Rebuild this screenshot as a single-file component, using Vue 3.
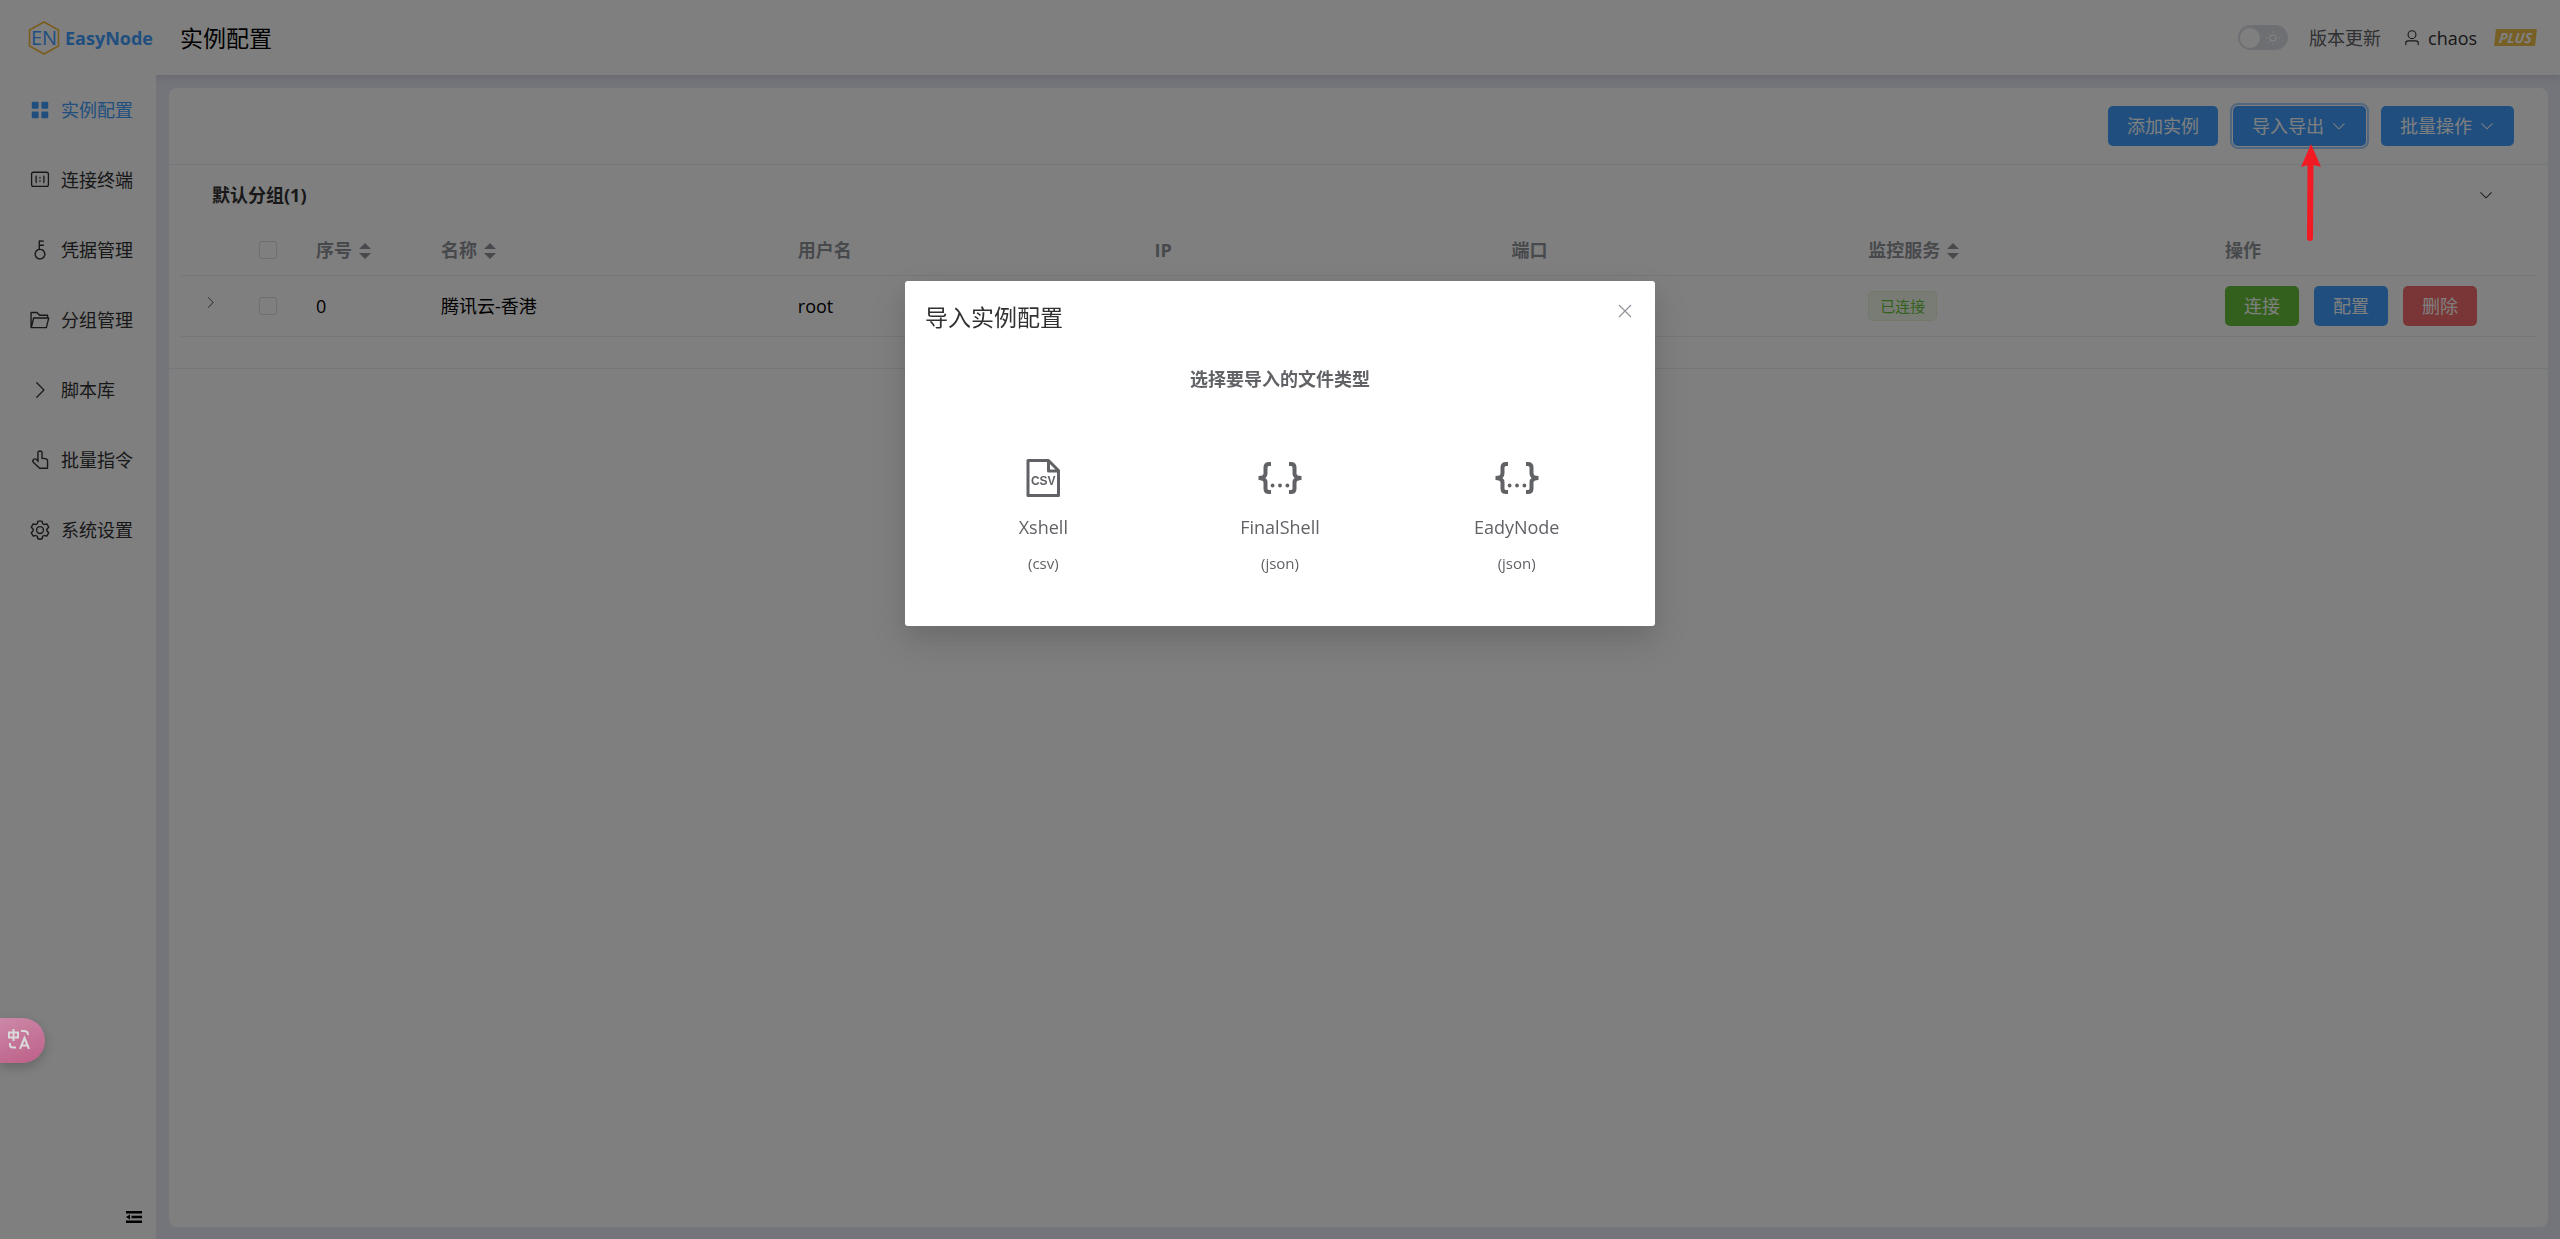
<template>
    <div class="page">
        <aside class="sidebar">
            <div class="logo">
                <svg class="logo-mark" viewBox="0 0 32 34">
                    <path d="M16 1 L30.500 9 V25 L16 33 L1.500 25 V9 Z" fill="none" stroke="#f5b83d" stroke-width="1.600" />
                    <text x="16" y="23.500" text-anchor="middle" class="logo-letters">EN</text>
                </svg>
                <span class="logo-name">EasyNode</span>
            </div>
            <nav class="menu">
                <a v-for="item in menu" :key="item.label" href="#" class="menu-item" :class="{ active: item.active }">
                    <svg class="menu-icon" viewBox="0 0 1024 1024" fill="currentColor">
                        <path :d="item.icon" />
                    </svg>
                    <span>{{ item.label }}</span>
                </a>
            </nav>
            <button class="collapse-btn" aria-label="收起菜单">
                <svg viewBox="0 0 16 14" fill="currentColor">
                    <path d="M0 1h16v2.500H0zM5.500 5.800H16v2.400H5.500zM0 10.500h16V13H0zM0 7l4-2.500v5z" />
                </svg>
            </button>
        </aside>

        <div class="main">
            <header class="topbar">
                <h1>实例配置</h1>
                <div class="topbar-right">
                    <button class="switch" role="switch" :aria-checked="dark" aria-label="深色模式" @click="dark = !dark">
                        <span class="knob"></span>
                        <svg viewBox="0 0 16 16" class="sun">
                            <circle cx="8" cy="8" r="3" fill="none" stroke="#fff" stroke-width="1.400" />
                            <path d="M8 1v2M8 13v2M1 8h2M13 8h2M3 3l1.300 1.300M11.700 11.700L13 13M3 13l1.300-1.300M11.700 4.300L13 3" stroke="#fff" />
                        </svg>
                    </button>
                    <a href="#" class="version">版本更新</a>
                    <a href="#" class="user">
                        <svg viewBox="0 0 1024 1024" fill="currentColor">
                            <path d="M512 512a192 192 0 1 0 0-384 192 192 0 0 0 0 384m0 64a256 256 0 1 1 0-512 256 256 0 0 1 0 512m320 320v-96a96 96 0 0 0-96-96H288a96 96 0 0 0-96 96v96a32 32 0 1 1-64 0v-96a160 160 0 0 1 160-160h448a160 160 0 0 1 160 160v96a32 32 0 1 1-64 0" />
                        </svg>
                        <span>chaos</span>
                    </a>
                    <span class="plus"><b>PLUS</b></span>
                </div>
            </header>

            <main class="content">
                <section class="card">
                    <div class="toolbar">
                        <button class="btn primary">添加实例</button>
                        <button class="btn primary focused">
                            导入导出
                            <svg class="arrow-down" viewBox="0 0 1024 1024" fill="currentColor"><path :d="chevronDown" /></svg>
                        </button>
                        <button class="btn primary">
                            批量操作
                            <svg class="arrow-down" viewBox="0 0 1024 1024" fill="currentColor"><path :d="chevronDown" /></svg>
                        </button>
                    </div>
                    <div class="group">
                        <button class="group-title">
                            <span>默认分组({{ hosts.length }})</span>
                            <svg class="arrow-down" viewBox="0 0 1024 1024" fill="currentColor"><path :d="chevronDown" /></svg>
                        </button>
                        <table class="hosts">
                            <colgroup>
                                <col class="col-tick">
                                <col class="col-tick">
                                <col class="col-index">
                                <col span="5">
                                <col class="col-action">
                            </colgroup>
                            <thead>
                                <tr>
                                    <th></th>
                                    <th class="tick"><input type="checkbox" aria-label="全选"></th>
                                    <th v-for="col in columns" :key="col.label">
                                        {{ col.label }}
                                        <svg v-if="col.sortable" class="sort" viewBox="0 0 12 16" fill="currentColor">
                                            <path d="M6 0l6 6H0zM6 16l6-6H0z" />
                                        </svg>
                                    </th>
                                </tr>
                            </thead>
                            <tbody>
                                <tr v-for="host in hosts" :key="host.index">
                                    <td class="tick">
                                        <button class="expand" aria-label="展开">
                                            <svg viewBox="0 0 1024 1024" fill="currentColor"><path :d="chevronRight" /></svg>
                                        </button>
                                    </td>
                                    <td class="tick"><input type="checkbox" :aria-label="host.name"></td>
                                    <td>{{ host.index }}</td>
                                    <td>{{ host.name }}</td>
                                    <td>{{ host.username }}</td>
                                    <td></td>
                                    <td></td>
                                    <td><span class="tag">已连接</span></td>
                                    <td>
                                        <div class="actions">
                                            <button class="btn success">连接</button>
                                            <button class="btn primary">配置</button>
                                            <button class="btn danger">删除</button>
                                        </div>
                                    </td>
                                </tr>
                            </tbody>
                        </table>
                    </div>
                </section>
            </main>
        </div>

        <div v-if="dialogVisible" class="overlay">
            <div class="dialog" role="dialog" aria-labelledby="dialog-title">
                <header class="dialog-header">
                    <h2 id="dialog-title">导入实例配置</h2>
                    <button class="close" aria-label="关闭" @click="dialogVisible = false">
                        <svg viewBox="0 0 14 14"><path d="M1 1l12 12M13 1L1 13" stroke="currentColor" stroke-width="1.200" /></svg>
                    </button>
                </header>
                <h3>选择要导入的文件类型</h3>
                <div class="types">
                    <button v-for="type in types" :key="type.name" class="type">
                        <svg v-if="type.ext === 'csv'" viewBox="0 0 48 48">
                            <path d="M9 6.500h20.500l10 10V41.500H9zM29.500 6.500V17H39.500" fill="none" stroke="currentColor" stroke-width="3" stroke-linejoin="round" />
                            <text x="24.300" y="31" text-anchor="middle" class="csv-letters">CSV</text>
                        </svg>
                        <svg v-else viewBox="0 0 48 48">
                            <g fill="none" stroke="currentColor" stroke-width="4">
                                <path d="M15 10H13q-3.500 0-3.500 3.500v6q0 4.500-7 4.500q7 0 7 4.500v6q0 3.500 3.500 3.500h2" />
                                <path d="M33 10H35q3.500 0 3.500 3.500v6q0 4.500 7 4.500q-7 0-7 4.500v6q0 3.500-3.500 3.500h-2" />
                            </g>
                            <g fill="currentColor">
                                <circle cx="16.600" cy="31.500" r="1.900" />
                                <circle cx="24" cy="31.500" r="1.900" />
                                <circle cx="31.400" cy="31.500" r="1.900" />
                            </g>
                        </svg>
                        <span class="type-name">{{ type.name }}</span>
                        <span class="type-ext">({{ type.ext }})</span>
                    </button>
                </div>
            </div>
        </div>

        <svg class="pointer" viewBox="0 0 22 98">
            <path d="M10.500 20L10 94" stroke="#f21b24" stroke-width="6" stroke-linecap="round" />
            <path d="M11 0L21 23Q11 19 1 23z" fill="#f21b24" />
        </svg>

        <button class="translate" aria-label="翻译">
            <svg viewBox="0 0 22 20" fill="none" stroke="#fff" stroke-width="2">
                <path d="M1 3.500h9v5H1zM5.500 0v12M13 2h3q4 0 4 4M2 14v2q0 2.500 3 2.500h3M12 20l4.500-11L21 20M13.500 16.500h6" />
            </svg>
        </button>
    </div>
</template>

<script setup>
import { ref } from 'vue';

const dark = ref(false);
const dialogVisible = ref(true);

const chevronDown = 'M831.872 340.864 512 652.672 192.128 340.864a30.592 30.592 0 0 0-42.752 0 29.120 29.120 0 0 0 0 41.600L489.664 714.240a32 32 0 0 0 44.672 0l340.288-331.712a29.120 29.120 0 0 0 0-41.728 30.592 30.592 0 0 0-42.752 0z';
const chevronRight = 'M340.864 149.312a30.592 30.592 0 0 0 0 42.752L652.736 512 340.864 831.872a30.592 30.592 0 0 0 0 42.752 29.120 29.120 0 0 0 41.728 0L714.240 534.336a32 32 0 0 0 0-44.672L382.592 149.376a29.120 29.120 0 0 0-41.728 0z';

const menu = [
    { label: '实例配置', active: true, icon: 'M160 448a32 32 0 0 1-32-32V160a32 32 0 0 1 32-32h256a32 32 0 0 1 32 32v256a32 32 0 0 1-32 32zm448 0a32 32 0 0 1-32-32V160a32 32 0 0 1 32-32h256a32 32 0 0 1 32 32v256a32 32 0 0 1-32 32zM160 896a32 32 0 0 1-32-32V608a32 32 0 0 1 32-32h256a32 32 0 0 1 32 32v256a32 32 0 0 1-32 32zm448 0a32 32 0 0 1-32-32V608a32 32 0 0 1 32-32h256a32 32 0 0 1 32 32v256a32 32 0 0 1-32 32z' },
    { label: '连接终端', icon: 'M813.176 180.706a60.235 60.235 0 0 1 60.236 60.235v481.883a60.235 60.235 0 0 1-60.236 60.235H210.824a60.235 60.235 0 0 1-60.236-60.235V240.940a60.235 60.235 0 0 1 60.236-60.235h602.352zm0-60.235H210.824A120.470 120.470 0 0 0 90.353 240.940v481.883a120.470 120.470 0 0 0 120.470 120.470h602.353a120.470 120.470 0 0 0 120.471-120.470V240.940a120.470 120.470 0 0 0-120.470-120.470zm-120.470 180.705a30.118 30.118 0 0 0-30.118 30.118v301.177a30.118 30.118 0 0 0 60.236 0V331.294a30.118 30.118 0 0 0-30.118-30.118zm-361.412 0a30.118 30.118 0 0 0-30.118 30.118v301.177a30.118 30.118 0 1 0 60.236 0V331.294a30.118 30.118 0 0 0-30.118-30.118zM512 361.412a30.118 30.118 0 0 0-30.118 30.117v30.118a30.118 30.118 0 0 0 60.236 0V391.530A30.118 30.118 0 0 0 512 361.412zM512 512a30.118 30.118 0 0 0-30.118 30.118v30.117a30.118 30.118 0 0 0 60.236 0v-30.117A30.118 30.118 0 0 0 512 512z' },
    { label: '凭据管理', icon: 'M448 456.064V96a32 32 0 0 1 32-32.064L672 64a32 32 0 0 1 0 64H512v128h160a32 32 0 0 1 0 64H512v128a256 256 0 1 1-64 8.064M512 896a192 192 0 1 0 0-384 192 192 0 0 0 0 384' },
    { label: '分组管理', icon: 'M878.080 448H241.920l-96 384h636.160l96-384zM832 384v-64H485.760L357.504 192H128v448l57.920-231.744A32 32 0 0 1 216.960 384zm-24.960 512H96a32 32 0 0 1-32-32V160a32 32 0 0 1 32-32h287.872l128.384 128H864a32 32 0 0 1 32 32v96h23.040a32 32 0 0 1 31.040 39.744l-112 448A32 32 0 0 1 807.040 896' },
    { label: '脚本库', icon: chevronRight },
    { label: '批量指令', icon: 'M511.552 128c-35.584 0-64.384 28.800-64.384 64.448v444.544L324.160 513.280c-25.152-25.280-65.792-25.280-90.944 0-25.152 25.344-25.152 66.368 0 91.712L507.520 864H832V569.600c0-45.312-34.560-83.200-79.680-87.552L576 464V192.448C576 156.800 547.136 128 511.552 128M359.040 441.216l24.128 24.320V192.448a128.448 128.448 0 1 1 256.832 0v213.632l118.592 11.840A151.936 151.936 0 0 1 896 569.600V896a32 32 0 0 1-32 32H494.784a32 32 0 0 1-21.952-8.768l-284.800-269.120a128.640 128.640 0 0 1 0-182.080 127.552 127.552 0 0 1 171.008-6.784z' },
    { label: '系统设置', icon: 'M600.704 64a32 32 0 0 1 30.464 22.208l35.200 109.376c14.784 7.232 28.928 15.360 42.432 24.512l112.384-24.192a32 32 0 0 1 34.432 15.360L944.320 364.800a32 32 0 0 1-4.032 37.504l-77.120 85.120a357.120 357.120 0 0 1 0 49.024l77.120 85.248a32 32 0 0 1 4.032 37.504l-88.704 153.600a32 32 0 0 1-34.432 15.296L708.800 803.904c-13.440 9.088-27.648 17.280-42.368 24.512l-35.264 109.376A32 32 0 0 1 600.704 960H423.296a32 32 0 0 1-30.464-22.208L357.696 828.480a351.616 351.616 0 0 1-42.560-24.640l-112.320 24.256a32 32 0 0 1-34.432-15.360L79.680 659.200a32 32 0 0 1 4.032-37.504l77.120-85.248a357.120 357.120 0 0 1 0-48.896l-77.120-85.248A32 32 0 0 1 79.680 364.800l88.704-153.600a32 32 0 0 1 34.432-15.296l112.320 24.256c13.568-9.152 27.776-17.408 42.560-24.640l35.200-109.312A32 32 0 0 1 423.232 64H600.640zm-23.424 64H446.720l-36.352 113.088-24.512 11.968a294.113 294.113 0 0 0-34.816 20.096l-22.656 15.360-116.224-25.088-65.280 113.152 79.680 88.192-1.920 27.136a293.120 293.120 0 0 0 0 40.192l1.920 27.136-79.808 88.192 65.344 113.152 116.224-25.024 22.656 15.296a294.113 294.113 0 0 0 34.816 20.096l24.512 11.968L446.720 896h130.688l36.480-113.152 24.448-11.904a288.282 288.282 0 0 0 34.752-20.096l22.592-15.296 116.288 25.024 65.280-113.152-79.744-88.192 1.920-27.136a293.120 293.120 0 0 0 0-40.256l-1.920-27.136 79.808-88.128-65.344-113.152-116.288 24.960-22.592-15.232a287.616 287.616 0 0 0-34.752-20.096l-24.448-11.904L577.344 128zM512 320a192 192 0 1 1 0 384 192 192 0 0 1 0-384m0 64a128 128 0 1 0 0 256 128 128 0 0 0 0-256' },
];

const columns = [
    { label: '序号', sortable: true },
    { label: '名称', sortable: true },
    { label: '用户名' },
    { label: 'IP' },
    { label: '端口' },
    { label: '监控服务', sortable: true },
    { label: '操作' },
];

const hosts = [{ index: 0, name: '腾讯云-香港', username: 'root' }];

const types = [
    { name: 'Xshell', ext: 'csv' },
    { name: 'FinalShell', ext: 'json' },
    { name: 'EadyNode', ext: 'json' },
];
</script>

<style>
body {
    margin: 0;
    background: #fff;
}
</style>

<style scoped>
* {
    box-sizing: border-box;
}

.page {
    display: flex;
    min-height: 100vh;
    font-family: "Open Sans", "Noto Sans CJK SC", sans-serif;
    font-size: 18px;
    line-height: 28px;
    color: #303133;
}

button {
    padding: 0;
    border: 0;
    background: none;
    font: inherit;
    color: inherit;
    cursor: pointer;
}

a {
    color: inherit;
    text-decoration: none;
}

h1,
h2,
h3 {
    margin: 0;
}

svg {
    display: block;
    flex: none;
}

.sidebar {
    display: flex;
    flex-direction: column;
    width: 156px;
    flex: none;
    background: #fff;
}

.logo {
    display: flex;
    align-items: center;
    gap: 5px;
    height: 75px;
    padding-left: 28px;
}

.logo-mark {
    width: 32px;
    height: 34px;
}

.logo-letters {
    font-family: "Open Sans", sans-serif;
    font-size: 20px;
    fill: #409eff;
}

.logo-name {
    font-weight: 700;
    color: #409eff;
}

.menu-item {
    display: flex;
    align-items: center;
    gap: 10px;
    height: 70px;
    padding-left: 29px;
}

.menu-item.active {
    color: #409eff;
}

.menu-icon {
    width: 22px;
    height: 22px;
}

.collapse-btn {
    align-self: flex-end;
    margin: auto 14px 15px 0;
    color: #000;
}

.collapse-btn svg {
    width: 16px;
    height: 14px;
}

.main {
    display: flex;
    flex-direction: column;
    flex: 1;
    min-width: 0;
}

.topbar {
    position: relative;
    display: flex;
    align-items: center;
    justify-content: space-between;
    height: 75px;
    padding: 0 24px;
    background: #fff;
    box-shadow: 0 2px 8px rgba(0, 0, 0, 0.12);
    clip-path: inset(0 0 -12px 0);
}

.topbar h1 {
    font-size: 23px;
    font-weight: 400;
    color: #000;
}

.topbar-right {
    display: flex;
    align-items: center;
}

.switch {
    display: flex;
    align-items: center;
    justify-content: space-between;
    width: 50px;
    height: 25px;
    padding: 0 7px 0 2px;
    border-radius: 13px;
    background: #dcdfe6;
}

.knob {
    width: 20px;
    height: 20px;
    border-radius: 50%;
    background: #fff;
}

.sun {
    width: 16px;
    height: 16px;
}

.version {
    margin-left: 21px;
    color: #606266;
}

.user {
    display: flex;
    align-items: center;
    gap: 7px;
    margin: 0 18px 0 22px;
}

.user svg {
    width: 18px;
    height: 18px;
}

.plus {
    padding: 0 4px;
    background: #ecc04a;
    font-size: 14px;
    line-height: 17px;
    font-style: italic;
    color: #fff;
    transform: skewX(-6deg);
}

.content {
    display: flex;
    flex: 1;
    padding: 13px 12px 12px 13px;
    background: #e8eaf6;
}

.card {
    flex: 1;
    min-width: 0;
    border-radius: 8px;
    background: #fff;
}

.toolbar {
    display: flex;
    align-items: center;
    justify-content: flex-end;
    gap: 15px;
    height: 76px;
    padding-right: 34px;
}

.btn {
    display: flex;
    align-items: center;
    justify-content: center;
    gap: 7px;
    height: 40px;
    padding: 0 19px;
    border-radius: 5px;
    color: #fff;
    white-space: nowrap;
}

.primary {
    background: #409eff;
}

.success {
    background: #67c23a;
}

.danger {
    background: #f56c6c;
}

.focused {
    outline: 2px solid #a0cfff;
    outline-offset: 1px;
}

.arrow-down {
    width: 16px;
    height: 16px;
}

.group {
    padding-bottom: 31px;
    border-top: 1px solid #ebeef5;
    border-bottom: 1px solid #ebeef5;
}

.group-title {
    display: flex;
    align-items: center;
    justify-content: space-between;
    width: 100%;
    height: 60px;
    padding: 0 54px 0 43px;
    font-weight: 700;
}

.hosts {
    width: calc(100% - 24px);
    margin: 0 12px;
    table-layout: fixed;
    border-collapse: separate;
    border-spacing: 0;
    color: #000;
}

.col-tick {
    width: 60px;
}

.col-index {
    width: 125px;
}

.col-action {
    width: 326px;
}

.hosts th,
.hosts td {
    padding: 0 15px;
    border-bottom: 1px solid #ebeef5;
    text-align: left;
    white-space: nowrap;
}

.hosts th {
    height: 51px;
    font-weight: 700;
    color: #909399;
}

.hosts td {
    height: 61px;
}

.hosts .tick {
    padding: 0 0 0 18px;
}

.hosts input {
    appearance: none;
    display: block;
    width: 18px;
    height: 18px;
    margin: 0;
    border: 1px solid #dcdfe6;
    border-radius: 3px;
    background: #fff;
}

.sort {
    display: inline-block;
    width: 12px;
    height: 16px;
    margin-left: 2px;
    vertical-align: -2px;
}

.expand {
    display: block;
    padding: 0 0 8px 4px;
    color: #606266;
}

.expand svg {
    width: 15px;
    height: 15px;
}

.tag {
    display: block;
    width: fit-content;
    height: 30px;
    padding: 0 11px;
    border: 1px solid #e1f3d8;
    border-radius: 5px;
    background: #f0f9eb;
    font-size: 15px;
    color: #67c23a;
}

.actions {
    display: flex;
    gap: 15px;
}

.overlay {
    position: fixed;
    inset: 0;
    display: flex;
    align-items: flex-start;
    justify-content: center;
    padding-top: 281px;
    background: rgba(0, 0, 0, 0.5);
}

.dialog {
    width: 750px;
    padding: 20px;
    border-radius: 3px;
    background: #fff;
    box-shadow: 0 15px 40px 5px rgba(0, 0, 0, 0.1), 0 10px 25px rgba(0, 0, 0, 0.08);
}

.dialog-header {
    display: flex;
    justify-content: space-between;
    height: 60px;
}

.dialog-header h2 {
    font-size: 23px;
    line-height: 32px;
    font-weight: 400;
}

.close {
    width: 20px;
    height: 20px;
    color: #909399;
    display: flex;
    align-items: center;
    justify-content: center;
}

.close svg {
    width: 14px;
    height: 14px;
}

.dialog h3 {
    padding: 4px 0;
    font-size: 18px;
    text-align: center;
    color: #606266;
}

.types {
    display: grid;
    grid-template-columns: repeat(3, 1fr);
    padding: 52px 0 29px;
    color: #606266;
}

.type {
    display: flex;
    flex-direction: column;
    align-items: center;
    gap: 8px;
    padding-top: 5px;
}

.type svg {
    width: 48px;
    height: 48px;
    margin-bottom: 3px;
}

.csv-letters {
    font-family: "Liberation Sans", sans-serif;
    font-size: 12px;
    font-weight: 700;
    fill: #606266;
}

.type-ext {
    font-size: 15px;
}

/* points at the import button */
.pointer {
    position: absolute;
    top: 144px;
    right: 238px;
    width: 22px;
    height: 98px;
}

.translate {
    position: fixed;
    left: 0;
    top: 1018px;
    display: flex;
    align-items: center;
    width: 45px;
    height: 45px;
    padding: 0 0 4px 8px;
    border-radius: 0 23px 23px 0;
    background: linear-gradient(160deg, #ec8cb8, #d8528c);
    box-shadow: 0 4px 12px rgba(0, 0, 0, 0.3);
    opacity: 0.7;
}

.translate svg {
    width: 22px;
    height: 20px;
}
</style>
